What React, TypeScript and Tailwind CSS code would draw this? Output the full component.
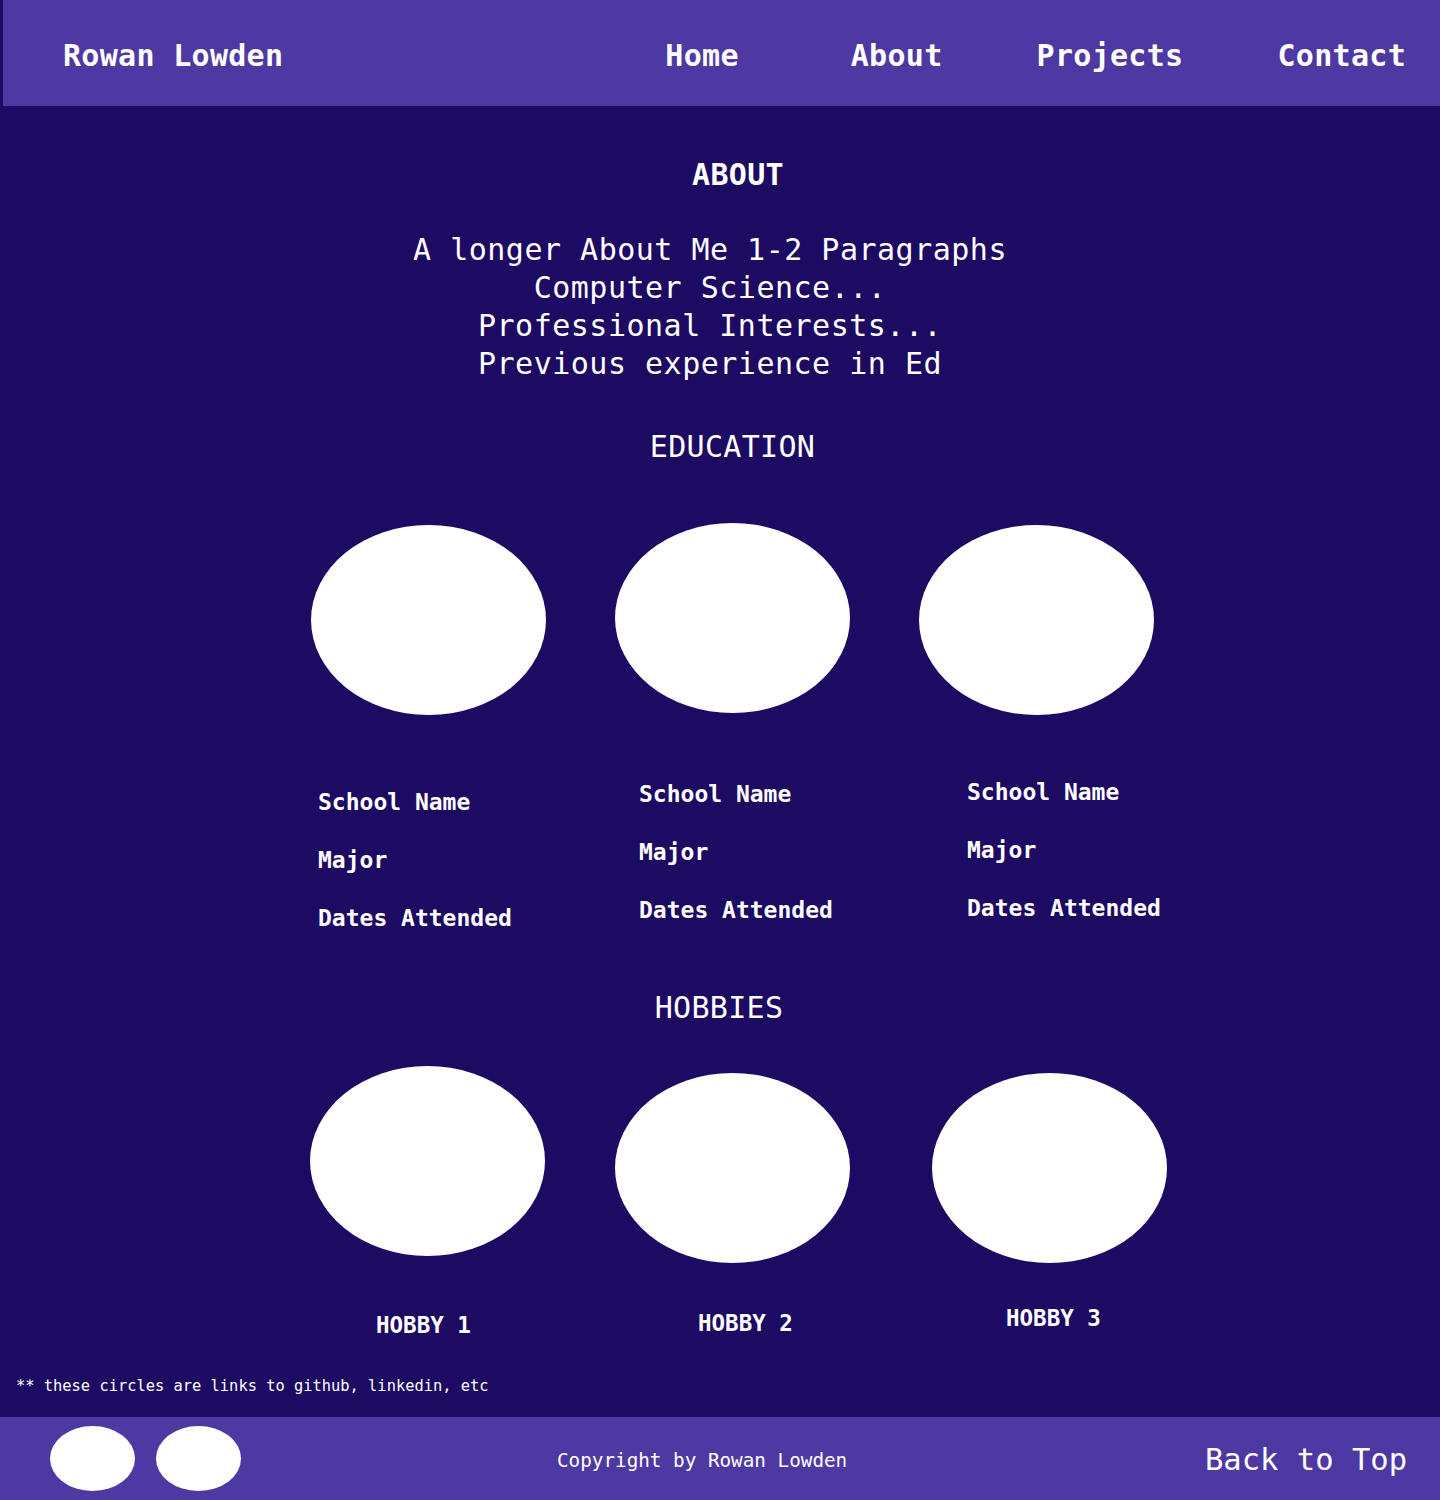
import React from "react";

const mono = { fontFamily: "'DejaVu Sans Mono', 'Liberation Mono', monospace" };

export default function App() {
  return (
    <div className="w-[1440px] h-[1500px] bg-[#1d0a62] text-white overflow-hidden" style={mono}>
      {/* Header */}
      <header className="ml-[3px] h-[106px] bg-[#4e38a2] flex items-center pt-[6px]">
        <div className="ml-[60px] text-[30px] tracking-[0.3px] font-bold leading-[36px] whitespace-nowrap">Rowan Lowden</div>
        <nav className="ml-auto flex items-center text-[30px] tracking-[0.3px] leading-[36px] pr-[34px] whitespace-nowrap">
          <a className="font-bold">Home</a>
          <a className="ml-[112px] font-bold">About</a>
          <a className="ml-[94px] font-bold">Projects</a>
          <a className="ml-[94px] font-bold">Contact</a>
        </nav>
      </header>

      {/* About */}
      <h2 className="mt-[51px] pl-[36px] text-center text-[30px] tracking-[0.3px] leading-[36px] font-bold">ABOUT</h2>
      <div className="mt-[38px] pr-[20px] text-center text-[30px] tracking-[0.5px] leading-[38px]">
        <p>A longer About Me 1-2 Paragraphs</p>
        <p>Computer Science...</p>
        <p>Professional Interests...</p>
        <p>Previous experience in Ed</p>
      </div>

      {/* Education */}
      <h2 className="mt-[46px] pl-[25px] text-center text-[30px] tracking-[0.3px] leading-[36px]">EDUCATION</h2>
      <div className="mt-[58px] pl-[311px] flex items-start gap-[69px]">
        <div className="w-[235px]">
          <div className="mt-[2px] h-[190px] w-[235px] rounded-[50%] bg-white" />
          <div className="mt-[58px] pl-[7px] text-[23px] font-bold leading-[58px] whitespace-nowrap">
            <p>School Name</p>
            <p>Major</p>
            <p>Dates Attended</p>
          </div>
        </div>
        <div className="w-[235px]">
          <div className="h-[190px] w-[235px] rounded-[50%] bg-white" />
          <div className="mt-[52px] pl-[24px] text-[23px] font-bold leading-[58px] whitespace-nowrap">
            <p>School Name</p>
            <p>Major</p>
            <p>Dates Attended</p>
          </div>
        </div>
        <div className="w-[235px]">
          <div className="mt-[2px] h-[190px] w-[235px] rounded-[50%] bg-white" />
          <div className="mt-[48px] pl-[48px] text-[23px] font-bold leading-[58px] whitespace-nowrap">
            <p>School Name</p>
            <p>Major</p>
            <p>Dates Attended</p>
          </div>
        </div>
      </div>

      {/* Hobbies */}
      <h2 className="mt-[43px] pr-[2px] text-center text-[30px] tracking-[0.3px] leading-[36px]">HOBBIES</h2>
      <div className="mt-[40px] pl-[310px] flex items-start">
        <div className="w-[235px]">
          <div className="h-[190px] w-[235px] rounded-[50%] bg-white" />
          <div className="mt-[54px] pl-[66px] text-[22.5px] font-bold leading-[30px] whitespace-nowrap">HOBBY 1</div>
        </div>
        <div className="ml-[70px] w-[235px]">
          <div className="mt-[7px] h-[190px] w-[235px] rounded-[50%] bg-white" />
          <div className="mt-[45px] pl-[83px] text-[22.5px] font-bold leading-[30px] whitespace-nowrap">HOBBY 2</div>
        </div>
        <div className="ml-[82px] w-[235px]">
          <div className="mt-[7px] h-[190px] w-[235px] rounded-[50%] bg-white" />
          <div className="mt-[40px] pl-[74px] text-[22.5px] font-bold leading-[30px] whitespace-nowrap">HOBBY 3</div>
        </div>
      </div>

      <p className="mt-[36px] pl-[16px] text-[15.4px] leading-[20px] whitespace-nowrap">** these circles are links to github, linkedin, etc</p>

      {/* Footer */}
      <footer className="mt-[21px] h-[83px] bg-[#4e38a2] flex items-start">
        <div className="ml-[50px] mt-[9px] h-[65px] w-[85px] rounded-[50%] bg-white" />
        <div className="ml-[21px] mt-[9px] h-[65px] w-[85px] rounded-[50%] bg-white" />
        <div className="ml-[316px] mt-[32px] text-[19.3px] leading-[24px] whitespace-nowrap">Copyright by Rowan Lowden</div>
        <div className="ml-auto mr-[33px] mt-[25px] text-[30.5px] leading-[36px] whitespace-nowrap">Back to Top</div>
      </footer>
    </div>
  );
}
